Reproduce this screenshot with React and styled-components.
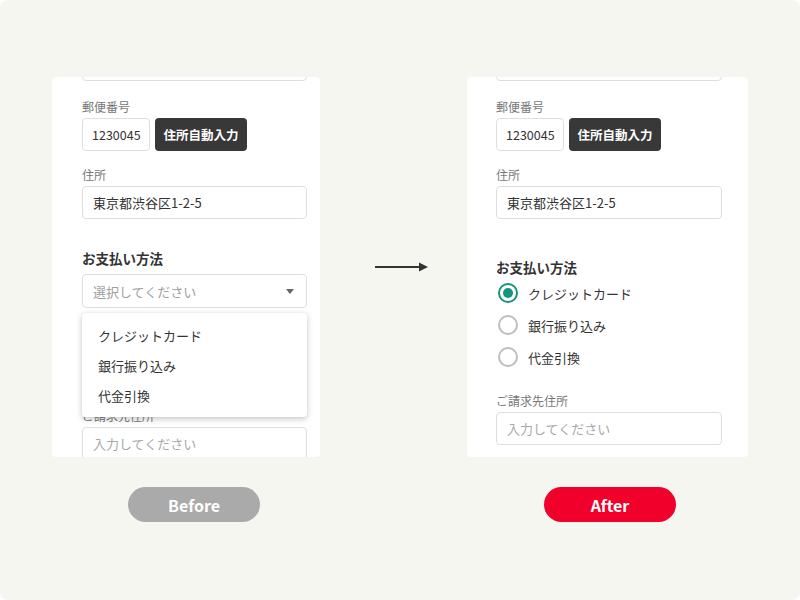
import React from 'react';
import styled, { createGlobalStyle, css } from 'styled-components';

const GlobalStyle = createGlobalStyle`
  html, body {
    margin: 0;
    padding: 0;
    background: #ffffff;
  }
  body {
    font-family: "Noto Sans CJK JP", "Noto Sans", sans-serif;
    color: #333;
  }
`;

const Frame = styled.div`
  width: 800px;
  height: 600px;
  box-sizing: border-box;
  background: #f6f6f1;
  border-radius: 8px;
  overflow: hidden;
  display: grid;
  grid-template-columns: 284px 131px 286px;
  align-items: start;
  padding: 77px 0 0 52px;
`;

const Column = styled.div`
  display: flex;
  flex-direction: column;
  align-items: center;
`;

const Card = styled.div`
  align-self: flex-start;
  box-sizing: border-box;
  width: ${p => p.$width}px;
  height: 380px;
  background: #fff;
  border-radius: 4px;
  overflow: hidden;
  padding: 0 ${p => p.$padRight}px 0 ${p => p.$padLeft}px;
  display: flex;
  flex-direction: column;

  & > * {
    flex-shrink: 0;
  }
`;

const inputBox = css`
  box-sizing: border-box;
  height: 33px;
  border: 1px solid #dedede;
  border-radius: 4px;
  background: #fff;
  display: flex;
  align-items: center;
  padding: 0 10px;
  font-size: 13px;
  color: #333;
`;

const StubInput = styled.div`
  ${inputBox};
  margin-top: -29px;
`;

const Field = styled.div`
  display: flex;
  flex-direction: column;
  margin-top: ${p => p.$gap}px;
  position: relative;
`;

const Label = styled.div`
  font-size: 12px;
  line-height: 18px;
  color: #777;
  margin-bottom: 2px;
`;

const Heading = styled.div`
  font-size: 13.5px;
  line-height: 20px;
  font-weight: 700;
  color: #333;
  margin-bottom: ${p => p.$after || 0}px;
`;

const Row = styled.div`
  display: flex;
  gap: 5px;
`;

const Input = styled.div`
  ${inputBox};
  width: ${p => (p.$width ? `${p.$width}px` : 'auto')};
  color: ${p => (p.$placeholder ? '#a8a8a8' : '#333')};
`;

const PostalInput = styled(Input)`
  padding: 0 9px;
  font-size: 12.5px;
`;

const DarkButton = styled.div`
  box-sizing: border-box;
  height: 33px;
  width: 92px;
  border-radius: 4px;
  background: #383838;
  color: #fff;
  font-size: 12.5px;
  font-weight: 700;
  display: flex;
  align-items: center;
  justify-content: center;
`;

const SelectBox = styled.div`
  ${inputBox};
  height: 34px;
  justify-content: space-between;
  color: #a0a0a0;
  padding-right: 12px;
`;

const Caret = styled.span`
  width: 0;
  height: 0;
  border-left: 4.5px solid transparent;
  border-right: 4.5px solid transparent;
  border-top: 5px solid #666;
`;

const Menu = styled.div`
  position: absolute;
  left: 0;
  right: 0;
  top: calc(100% + 5px);
  background: #fff;
  border-radius: 3px;
  box-shadow: 0 2px 6px rgba(0, 0, 0, 0.22), 0 0 1px rgba(0, 0, 0, 0.12);
  padding: 7px 0;
  z-index: 2;
`;

const MenuItem = styled.div`
  height: 30px;
  display: flex;
  align-items: center;
  padding-left: 16px;
  font-size: 13px;
  color: #333;
`;

const RadioRow = styled.label`
  height: 32px;
  display: flex;
  align-items: center;
  gap: 10px;
  font-size: 13px;
  color: #333;
`;

const RadioCircle = styled.span`
  box-sizing: border-box;
  width: 20px;
  height: 20px;
  margin-left: 2px;
  border-radius: 50%;
  border: 2px solid ${p => (p.$checked ? '#16947f' : '#bdbdbd')};
  display: flex;
  align-items: center;
  justify-content: center;

  &::after {
    content: '';
    width: 10px;
    height: 10px;
    border-radius: 50%;
    background: ${p => (p.$checked ? '#16947f' : 'transparent')};
  }
`;

const ArrowCol = styled.div`
  display: flex;
  justify-content: center;
  padding-top: 184px;
`;

const Pill = styled.div`
  margin-top: 30px;
  width: 132px;
  height: 35px;
  border-radius: 18px;
  background: ${p => p.$bg};
  color: #fff;
  font-size: 16px;
  font-weight: 700;
  display: flex;
  align-items: center;
  justify-content: center;
`;

const AddressFields = () => (
  <>
    <StubInput />
    <Field $gap={17}>
      <Label>郵便番号</Label>
      <Row>
        <PostalInput $width={68}>1230045</PostalInput>
        <DarkButton>住所自動入力</DarkButton>
      </Row>
    </Field>
    <Field $gap={15}>
      <Label>住所</Label>
      <Input>東京都渋谷区1-2-5</Input>
    </Field>
  </>
);

const Arrow = () => (
  <svg width="54" height="12" viewBox="0 0 54 12">
    <line x1="0" y1="6" x2="46" y2="6" stroke="#333" strokeWidth="2" />
    <polygon points="44,1.5 53,6 44,10.5" fill="#333" />
  </svg>
);

const methods = ['クレジットカード', '銀行振り込み', '代金引換'];

export default function App() {
  return (
    <>
      <GlobalStyle />
      <Frame>
        <Column>
          <Card $width={268} $padLeft={30} $padRight={13}>
            <AddressFields />
            <Field $gap={29}>
              <Heading $after={6}>お支払い方法</Heading>
              <SelectBox>
                選択してください
                <Caret />
              </SelectBox>
              <Menu>
                {methods.map(m => (
                  <MenuItem key={m}>{m}</MenuItem>
                ))}
              </Menu>
            </Field>
            <Field $gap={99}>
              <Label>ご請求先住所</Label>
              <Input $placeholder>入力してください</Input>
            </Field>
          </Card>
          <Pill $bg="#aaaaaa">Before</Pill>
        </Column>

        <ArrowCol>
          <Arrow />
        </ArrowCol>

        <Column>
          <Card $width={281} $padLeft={29} $padRight={26}>
            <AddressFields />
            <Field $gap={38}>
              <Heading>お支払い方法</Heading>
              {methods.map((m, i) => (
                <RadioRow key={m}>
                  <RadioCircle $checked={i === 0} />
                  {m}
                </RadioRow>
              ))}
            </Field>
            <Field $gap={19}>
              <Label>ご請求先住所</Label>
              <Input $placeholder>入力してください</Input>
            </Field>
          </Card>
          <Pill $bg="#f0002a">After</Pill>
        </Column>
      </Frame>
    </>
  );
}
